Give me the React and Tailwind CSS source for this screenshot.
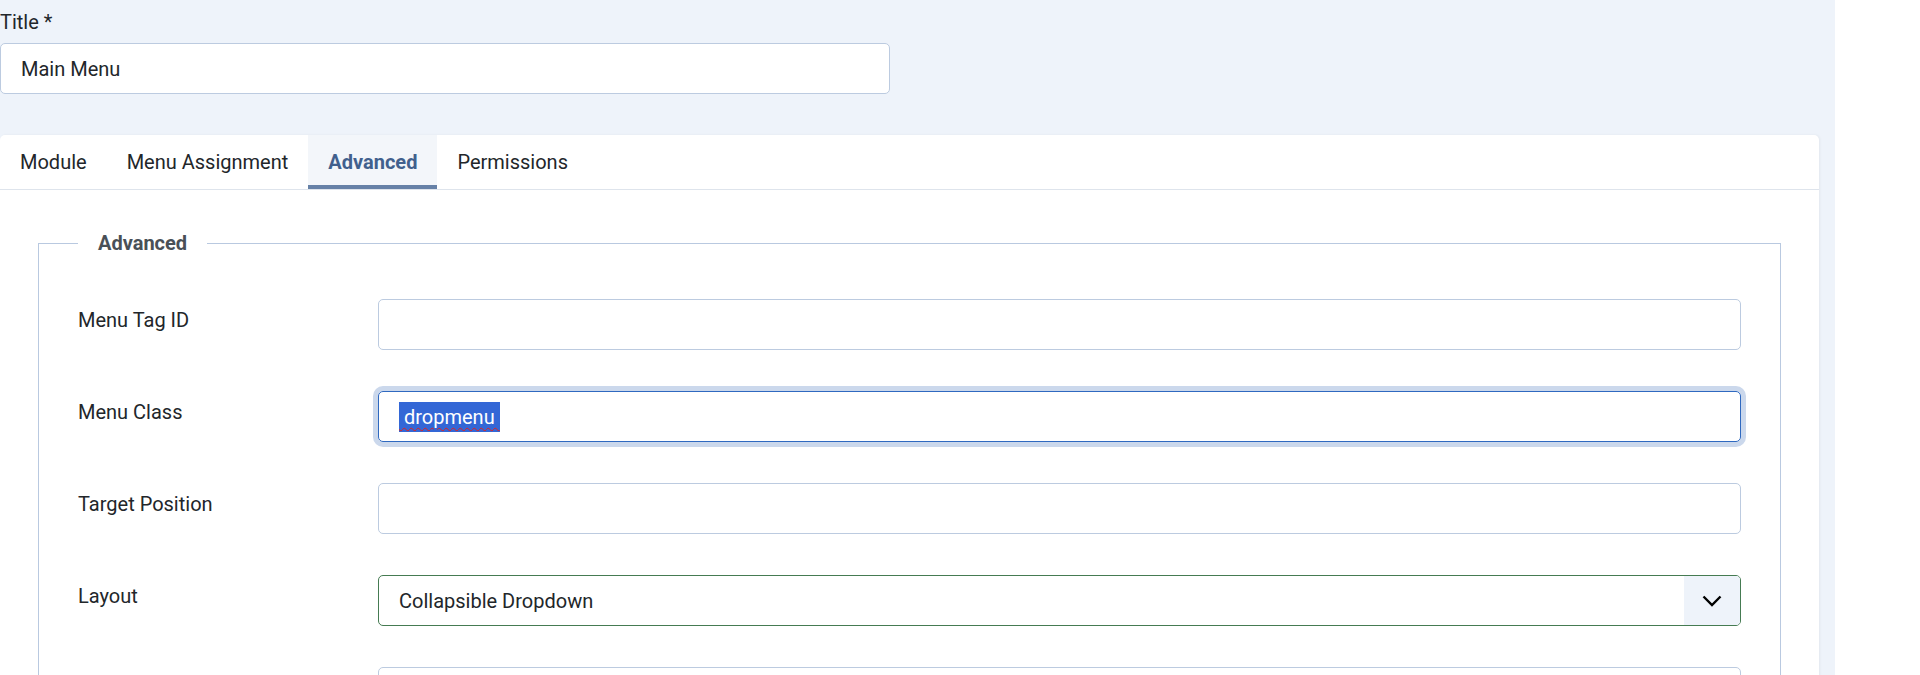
export default function App() {
    const tabs = ['Module', 'Menu Assignment', 'Advanced', 'Permissions'];
    const activeTab = 'Advanced';

    // the last row sits just under the fold, only its input's top edge shows
    const rows = [
        { label: 'Menu Tag ID', value: '' },
        { label: 'Menu Class', value: ' dropmenu ', focused: true },
        { label: 'Target Position', value: '' },
        { label: 'Layout', value: 'Collapsible Dropdown', select: true },
        { label: '', value: '' },
    ];

    return (
        <div className="min-h-screen bg-white font-['Roboto',sans-serif] text-[20px] leading-[30px] text-[#22262a]">
            <div className="w-[1835px] bg-[#eef3fa] pr-[16px] pt-[7px]">
                {/* Title */}
                <label className="mb-[6px] block">Title *</label>
                <div className="h-[51px] w-[890px] rounded-[5px] border border-[#bccbe0] bg-white px-[20px] py-[10px]">
                    Main Menu
                </div>

                {/* Card */}
                <div className="mt-[41px] rounded-t-[5px] bg-white shadow-[1px_0_3px_rgba(0,0,0,0.05)]">
                    {/* Tabs */}
                    <div className="flex border-b border-[#dee4ec]">
                        {tabs.map((tab) => (
                            <div
                                key={tab}
                                className={
                                    tab === activeTab
                                        ? 'flex h-[54px] items-center bg-[#f3f6fa] px-[20px] font-bold text-[#41608d] shadow-[inset_0_-4px_0_#6681a7]'
                                        : 'flex h-[54px] items-center px-[20px]'
                                }
                            >
                                {tab}
                            </div>
                        ))}
                    </div>

                    <div className="px-[38px] pt-[38px]">
                        <fieldset className="border border-[#b9c9e0] px-[39px] pb-[40px] pt-[41px]">
                            <legend className="px-[20px] font-bold text-[#495057]">Advanced</legend>
                            <div className="flex flex-col gap-[41px]">
                                {rows.map((row, i) => (
                                    <div key={i} className="flex">
                                        <div className="w-[300px] shrink-0 pt-[6px]">{row.label}</div>
                                        {row.select ? (
                                            <div className="flex h-[51px] flex-1 items-stretch overflow-hidden rounded-[5px] border border-[#457b52]">
                                                <div className="flex flex-1 items-center px-[20px]">
                                                    {row.value}
                                                </div>
                                                <div className="flex w-[56px] items-center justify-center bg-[#eef3fa]">
                                                    <svg width="20" height="12" viewBox="0 0 20 12" fill="none">
                                                        <path
                                                            d="M1.5 1.5l8.5 8.5 8.5-8.5"
                                                            stroke="#000"
                                                            strokeWidth="2.4"
                                                        />
                                                    </svg>
                                                </div>
                                            </div>
                                        ) : row.focused ? (
                                            <div className="flex h-[51px] flex-1 items-center rounded-[5px] border border-[#2f69c0] px-[20px] shadow-[0_0_0_5px_#cbd8ec]">
                                                <span className="whitespace-pre bg-[#3367d6] text-white underline decoration-[#e0211f] decoration-wavy decoration-1 underline-offset-[3px]">
                                                    {row.value}
                                                </span>
                                            </div>
                                        ) : (
                                            <div className="h-[51px] flex-1 rounded-[5px] border border-[#bccbe0] bg-white px-[20px] py-[10px]">
                                                {row.value}
                                            </div>
                                        )}
                                    </div>
                                ))}
                            </div>
                        </fieldset>
                    </div>
                </div>
            </div>
        </div>
    );
}
